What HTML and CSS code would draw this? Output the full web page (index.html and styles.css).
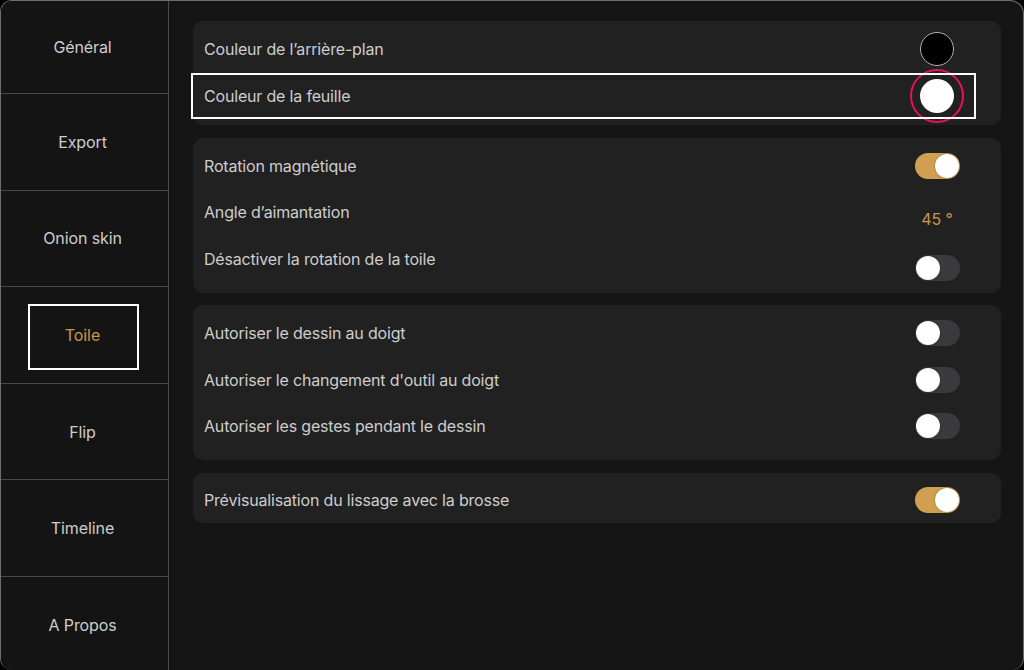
FILE: index.html
```html
<!DOCTYPE html>
<html lang="fr">
<head>
    <meta charset="UTF-8">
    <meta name="viewport" content="width=device-width, initial-scale=1.0">
    <title>Réglages - Toile</title>
    <link rel="stylesheet" href="styles.css">
</head>
<body>
    <div class="frame">
        <nav class="sidebar">
            <div class="nav-item">Général</div>
            <div class="nav-item">Export</div>
            <div class="nav-item">Onion skin</div>
            <div class="nav-item active">Toile</div>
            <div class="nav-item">Flip</div>
            <div class="nav-item">Timeline</div>
            <div class="nav-item">A Propos</div>
        </nav>

        <main class="content">
            <section class="card card-short">
                <div class="row">
                    <span class="label">Couleur de l’arrière-plan</span>
                    <span class="control"><span class="swatch swatch-black"></span></span>
                </div>
                <div class="row row-highlight">
                    <span class="label">Couleur de la feuille</span>
                    <span class="control"><span class="swatch swatch-white ringed"></span></span>
                </div>
            </section>

            <section class="card card-tall">
                <div class="row">
                    <span class="label">Rotation magnétique</span>
                    <span class="control"><span class="toggle on"></span></span>
                </div>
                <div class="row">
                    <span class="label">Angle d’aimantation</span>
                    <span class="control shift-a"><span class="value">45 °</span></span>
                </div>
                <div class="row">
                    <span class="label">Désactiver la rotation de la toile</span>
                    <span class="control shift-b"><span class="toggle"></span></span>
                </div>
            </section>

            <section class="card card-tall">
                <div class="row">
                    <span class="label">Autoriser le dessin au doigt</span>
                    <span class="control"><span class="toggle"></span></span>
                </div>
                <div class="row">
                    <span class="label">Autoriser le changement d'outil au doigt</span>
                    <span class="control"><span class="toggle"></span></span>
                </div>
                <div class="row">
                    <span class="label">Autoriser les gestes pendant le dessin</span>
                    <span class="control"><span class="toggle"></span></span>
                </div>
            </section>

            <section class="card">
                <div class="row">
                    <span class="label">Prévisualisation du lissage avec la brosse</span>
                    <span class="control"><span class="toggle on"></span></span>
                </div>
            </section>
        </main>
    </div>
</body>
</html>
```

FILE: styles.css
```css
html, body {
    margin: 0;
    padding: 0;
    background-color: #000000;
}
body {
    font-family: Inter, "Noto Sans", sans-serif;
    font-size: 16px;
    color: #cdcdcd;
}
.frame {
    width: 1024px;
    height: 670px;
    box-sizing: border-box;
    display: flex;
    background-color: #151515;
    border: 1px solid #6e6e6e;
    border-bottom: none;
    border-radius: 12px 14px 12px 12px;
    overflow: hidden;
}
.sidebar {
    width: 167px;
    flex-shrink: 0;
    display: flex;
    flex-direction: column;
    border-right: 1px solid #4c4c4c;
    background-color: #141414;
}
.nav-item {
    height: 96.6px;
    box-sizing: border-box;
    flex-shrink: 0;
    display: flex;
    align-items: center;
    justify-content: center;
    padding-right: 4px;
    border-bottom: 1px solid #474747;
    letter-spacing: -0.1px;
    position: relative;
}
.nav-item:first-child {
    height: 93px;
}
.nav-item:last-child {
    border-bottom: none;
    flex: 1;
    padding-top: 4px;
}
.nav-item.active {
    color: #c9974c;
}
.nav-item.active::after {
    content: '';
    position: absolute;
    top: 17px;
    left: 27px;
    right: 29px;
    bottom: 13px;
    border: 2px solid #ffffff;
}
.content {
    flex: 1;
    padding: 20px 22px 0 24px;
    display: flex;
    flex-direction: column;
    gap: 12.5px;
}
.card {
    background-color: #212121;
    border-radius: 10px;
    padding: 4px 0 0 0;
}
.card-short {
    padding: 5px 0 6px 0;
}
.card-tall {
    padding: 5px 0 10.5px 0;
}
.row {
    height: 46.5px;
    display: flex;
    align-items: center;
    padding: 0 34px 0 11px;
    position: relative;
}
.label {
    flex: 1;
    letter-spacing: -0.18px;
}
.control {
    width: 60px;
    display: flex;
    justify-content: center;
    align-items: center;
}
.shift-a {
    margin-top: 14px;
}
.shift-b {
    margin-top: 18px;
}
.row-highlight::after {
    content: '';
    position: absolute;
    top: 0;
    bottom: 0;
    left: -2px;
    right: 25px;
    border: 2px solid #ffffff;
    pointer-events: none;
}
.swatch {
    width: 34px;
    height: 34px;
    border-radius: 50%;
    box-sizing: border-box;
    position: relative;
}
.swatch-black {
    background-color: #000000;
    border: 1.5px solid #b0b0b0;
}
.swatch-white {
    background-color: #ffffff;
}
.ringed::after {
    content: '';
    position: absolute;
    top: -10px;
    left: -10px;
    right: -10px;
    bottom: -10px;
    border: 2.5px solid #e5125f;
    border-radius: 50%;
}
.value {
    color: #c9974c;
    letter-spacing: -0.1px;
}
.toggle {
    width: 45px;
    height: 26px;
    border-radius: 13px;
    background-color: #3a3a3c;
    position: relative;
}
.toggle::after {
    content: '';
    position: absolute;
    top: 1px;
    left: 1px;
    width: 24px;
    height: 24px;
    border-radius: 50%;
    background-color: #ffffff;
    box-shadow: 0 0 2px rgba(0, 0, 0, 0.4);
}
.toggle.on {
    background-color: #d09f52;
}
.toggle.on::after {
    left: 20px;
}
```
